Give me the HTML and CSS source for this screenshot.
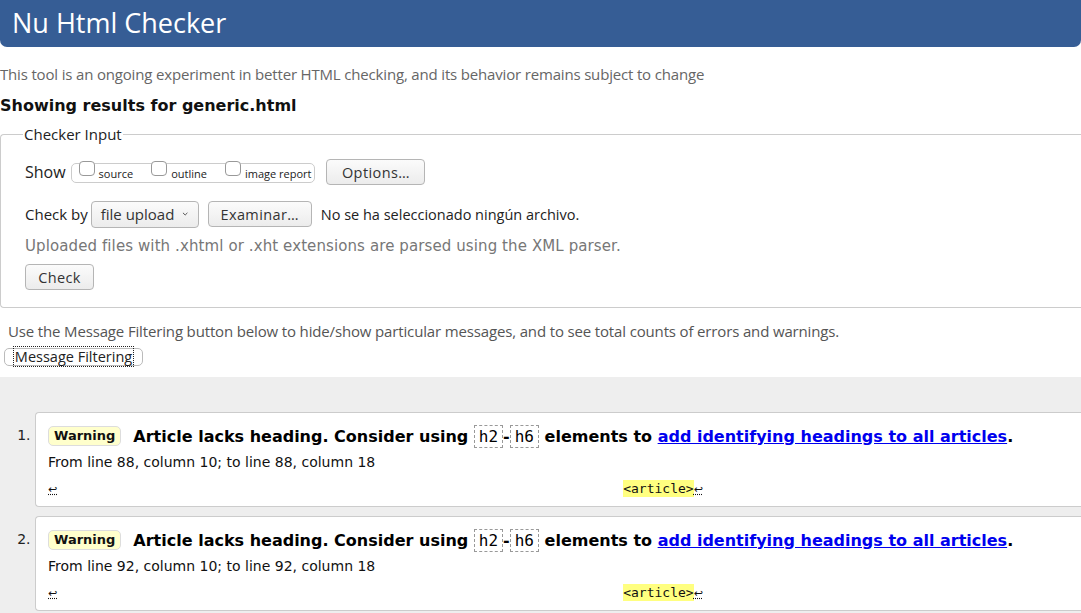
FILE: index.html
```html
<!DOCTYPE html>
<html lang="en">
<head>
<meta charset="utf-8">
<title>Nu Html Checker</title>
<link rel="stylesheet" href="styles.css">
</head>
<body>
<h1 class="top">Nu Html Checker</h1>
<p class="intro">This tool is an ongoing experiment in better HTML checking, and its behavior remains subject to change</p>
<h2 class="results">Showing results for generic.html</h2>
<fieldset class="input">
  <legend>Checker Input</legend>
  <div class="row show-row">
    <span class="lbl">Show</span>
    <span class="opts">
      <label><span class="cb"></span><span class="cbl">source</span></label>
      <label><span class="cb"></span><span class="cbl">outline</span></label>
      <label><span class="cb"></span><span class="cbl">image report</span></label>
    </span>
    <button class="btn">Options…</button>
  </div>
  <div class="row by-row">
    <span class="lbl">Check by</span>
    <span class="select">file upload <svg width="10" height="6" viewBox="0 0 10 6"><path d="M1.5 1.2 L5 4.6 L8.5 1.2" fill="none" stroke="#333" stroke-width="1.3"/></svg></span>
    <button class="btn">Examinar…</button>
    <span class="nofile">No se ha seleccionado ningún archivo.</span>
  </div>
  <p class="note">Uploaded files with .xhtml or .xht extensions are parsed using the XML parser.</p>
  <button class="btn check">Check</button>
</fieldset>
<p class="filter-note">Use the Message Filtering button below to hide/show particular messages, and to see total counts of errors and warnings.</p>
<button class="filter-btn"><span>Message Filtering</span></button>
<section class="results-area">
  <ol class="msgs">
    <li class="msg">
      <p class="head"><span class="badge">Warning</span><span class="text">Article lacks heading. Consider using <code>h2</code>-<code>h6</code> elements to <a href="#">add identifying headings to all articles</a>.</span></p>
      <p class="loc">From line 88, column 10; to line 88, column 18</p>
      <p class="extract"><span class="lf">↩</span><span class="gap"></span><b>&lt;article&gt;</b><span class="lf">↩</span></p>
    </li>
    <li class="msg">
      <p class="head"><span class="badge">Warning</span><span class="text">Article lacks heading. Consider using <code>h2</code>-<code>h6</code> elements to <a href="#">add identifying headings to all articles</a>.</span></p>
      <p class="loc">From line 92, column 10; to line 92, column 18</p>
      <p class="extract"><span class="lf">↩</span><span class="gap"></span><b>&lt;article&gt;</b><span class="lf">↩</span></p>
    </li>
  </ol>
</section>
</body>
</html>
```

FILE: styles.css
```css
html, body {
  margin: 0;
  padding: 0;
  background: #fff;
  overflow: hidden;
}
body {
  font-family: "Open Sans", "Noto Sans", sans-serif;
  color: #222;
}
.top {
  margin: 0;
  height: 47px;
  line-height: 45px;
  padding-left: 12px;
  background: #365d95;
  color: #fff;
  font-weight: normal;
  font-size: 27px;
  border-radius: 0 0 7px 7px;
}
.intro {
  margin: 17px 0 0 0;
  font-size: 15px;
  line-height: 20px;
  color: #666;
  letter-spacing: -0.17px;
}
.results {
  margin: 12px 0 0 0;
  font-family: "DejaVu Sans", sans-serif;
  font-weight: bold;
  font-size: 16px;
  line-height: 20px;
  color: #111;
}
.input {
  margin: 8px 0 0 0;
  border: 1px solid #ccc;
  border-right: none;
  border-radius: 4px 0 0 4px;
  padding: 15px 24px 17px 24px;
}
.input legend {
  padding: 0 1px;
  margin-left: -2px;
  font-size: 15px;
  color: #222;
}
.row {
  display: flex;
  align-items: center;
  height: 26px;
}
.lbl {
  font-size: 15px;
  color: #222;
  white-space: nowrap;
}
.show-row .lbl { font-size: 16px; }
.opts {
  display: flex;
  align-items: flex-start;
  margin-left: 5px;
  height: 18px;
  border: 1px solid #ccc;
  border-radius: 5px;
  padding: 0 3px 0 7px;
  margin-top: 2px;
  white-space: nowrap;
}
.opts label {
  display: flex;
  align-items: flex-start;
  margin-right: 18px;
  white-space: nowrap;
}
.opts label:last-child { margin-right: 0; }
.cb {
  flex: none;
  width: 14px;
  height: 13px;
  border: 1px solid #999;
  border-radius: 4px;
  background: #fff;
  margin-top: -3px;
  margin-right: 4px;
}
.cbl {
  font-size: 11px;
  line-height: 18px;
  margin-top: 1px;
  color: #222;
  white-space: nowrap;
}
.btn {
  font-family: "Open Sans", "Noto Sans", sans-serif;
  font-size: 14.5px;
  color: #333;
  background: linear-gradient(#fbfbfb, #ececec);
  border: 1px solid #b5b5b5;
  border-radius: 4px;
  height: 26px;
  padding: 0;
  letter-spacing: 0.4px;
  white-space: nowrap;
}
.show-row .btn { margin-left: 11px; width: 99px; }
.by-row {
  margin-top: 16px;
}
.by-row .lbl { margin-right: 3px; }
.select {
  display: inline-flex;
  align-items: center;
  gap: 8px;
  height: 27px;
  box-sizing: border-box;
  border: 1px solid #b5b5b5;
  border-radius: 4px;
  background: linear-gradient(#fbfbfb, #ececec);
  padding: 0 9px;
  font-size: 15px;
  color: #333;
  width: 108px;
  white-space: nowrap;
}
.by-row .btn { margin-left: 9px; width: 104px; }
.nofile {
  margin-left: 9px;
  font-size: 14.5px;
  color: #222;
  white-space: nowrap;
}
.note {
  margin: 10px 0 0 0;
  font-family: "DejaVu Sans", sans-serif;
  font-size: 15px;
  line-height: 19px;
  color: #777;
  letter-spacing: 0.1px;
}
.check {
  display: block;
  margin-top: 8px;
  width: 69px;
  height: 26px;
}
.filter-note {
  margin: 13px 0 0 8px;
  font-size: 15px;
  line-height: 20px;
  color: #555;
  letter-spacing: -0.15px;
}
.filter-btn {
  display: block;
  margin: 7px 0 0 4px;
  height: 18px;
  width: 139px;
  padding: 0;
  background: #fff;
  border: 1px solid #bbb;
  border-radius: 5px;
  font-family: "Open Sans", "Noto Sans", sans-serif;
  font-size: 14.5px;
  line-height: 14px;
  color: #222;
}
.filter-btn span {
  outline: 1px dotted #222;
  padding: 0 1px;
}
.results-area {
  margin-top: 11px;
  background: #eee;
  padding: 35px 0 10px 0;
}
.msgs {
  margin: 0;
  padding: 0 0 0 35px;
  list-style: decimal;
  font-family: "DejaVu Sans", sans-serif;
}
.msg {
  background: #fff;
  border: 1px solid #ccc;
  border-right: none;
  border-radius: 4px 0 0 4px;
  padding: 12px 0 0 12px;
  height: 81px;
  margin-bottom: 9px;
}
.msg::marker {
  font-size: 14px;
  color: #222;
}
.head {
  margin: 0;
  display: flex;
  align-items: center;
  height: 22px;
}
.badge {
  display: inline-block;
  background: #ffffcc;
  border: 1px solid #ddd;
  border-radius: 5px;
  font-size: 13px;
  font-weight: bold;
  padding: 1px 5px 2px 5px;
  color: #111;
  margin-right: 12px;
}
.text {
  font-size: 16px;
  font-weight: bold;
  color: #000;
  white-space: nowrap;
}
.text code {
  font-family: "DejaVu Sans Mono", monospace;
  font-weight: normal;
  font-size: 16px;
  border: 1px dashed #999;
  padding: 1px 4px;
}
.text a {
  color: #0000ee;
}
.loc {
  margin: 7px 0 0 0;
  font-size: 14px;
  line-height: 17px;
  color: #111;
}
.extract {
  margin: 9px 0 0 0;
  font-family: "DejaVu Sans Mono", monospace;
  font-size: 13px;
  line-height: 17px;
  display: flex;
  align-items: flex-end;
}
.lf {
  font-family: "DejaVu Sans", sans-serif;
  font-size: 11px;
  line-height: 14px;
  text-decoration: underline dotted;
  color: #111;
}
.gap {
  width: 566px;
}
.extract b {
  font-weight: normal;
  background: #ffff80;
  color: #111;
}
```
